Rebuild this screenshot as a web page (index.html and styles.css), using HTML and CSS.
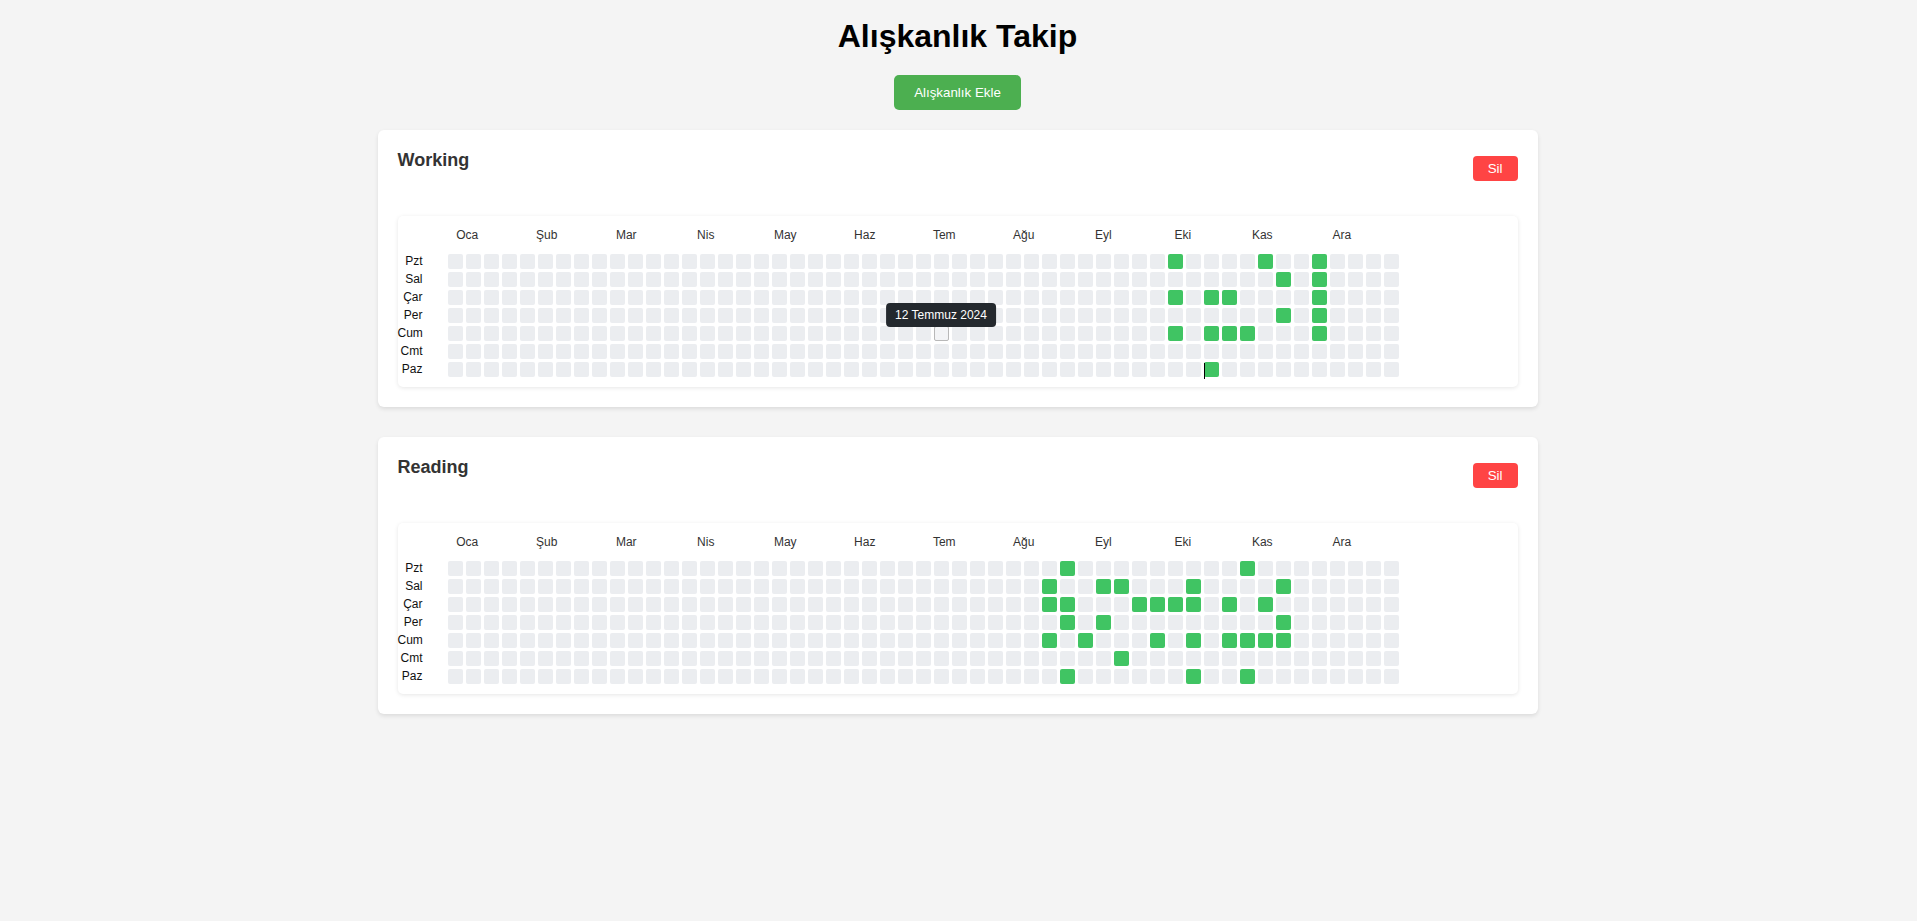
FILE: index.html
```html
<!DOCTYPE html>
<html lang="tr">
<head>
<meta charset="utf-8">
<title>Alışkanlık Takip</title>
<link rel="stylesheet" href="styles.css">
</head>
<body>
<div class="container">
  <h1 class="page-title">Alışkanlık Takip</h1>
  <div class="add-row"><button class="btn-add">Alışkanlık Ekle</button></div>

  <div class="habit" data-habit="working">
    <div class="habit-header">
      <h3 class="habit-title">Working</h3>
      <button class="btn-del">Sil</button>
    </div>
    <div class="cal">
      <div class="months"><span>Oca</span><span>Şub</span><span>Mar</span><span>Nis</span><span>May</span><span>Haz</span><span>Tem</span><span>Ağu</span><span>Eyl</span><span>Eki</span><span>Kas</span><span>Ara</span></div>
      <div class="cal-body">
        <div class="days"><span>Pzt</span><span>Sal</span><span>Çar</span><span>Per</span><span>Cum</span><span>Cmt</span><span>Paz</span></div>
        <div class="grid" id="grid-working"></div>
      </div>
    </div>
  </div>

  <div class="habit" data-habit="reading">
    <div class="habit-header">
      <h3 class="habit-title">Reading</h3>
      <button class="btn-del">Sil</button>
    </div>
    <div class="cal">
      <div class="months"><span>Oca</span><span>Şub</span><span>Mar</span><span>Nis</span><span>May</span><span>Haz</span><span>Tem</span><span>Ağu</span><span>Eyl</span><span>Eki</span><span>Kas</span><span>Ara</span></div>
      <div class="cal-body">
        <div class="days"><span>Pzt</span><span>Sal</span><span>Çar</span><span>Per</span><span>Cum</span><span>Cmt</span><span>Paz</span></div>
        <div class="grid" id="grid-reading"></div>
      </div>
    </div>
  </div>
</div>
<script src="script.js"></script>
</body>
</html>
```

FILE: styles.css
```css
* { box-sizing: border-box; }
body {
  margin: 0;
  background: #f4f4f4;
  font-family: "Liberation Sans", Arial, sans-serif;
  color: #000;
}
.container {
  width: 1160px;
  margin: 0 auto;
  padding-top: 18px;
  position: relative;
  left: -1px;
}
.page-title {
  margin: 0 0 20px;
  font-size: 32px;
  font-weight: bold;
  text-align: center;
  line-height: normal;
}
.add-row {
  display: flex;
  justify-content: center;
  margin-bottom: 20px;
}
.btn-add {
  font-family: "Liberation Sans", Arial, sans-serif;
  font-size: 13.333px;
  background: #4caf50;
  color: #fff;
  border: none;
  border-radius: 5px;
  padding: 10px 20px;
  line-height: normal;
}
.habit {
  background: #fff;
  border-radius: 6px;
  box-shadow: 0 2px 4px rgba(0, 0, 0, 0.1);
  padding: 20px;
  margin-bottom: 30px;
}
.habit-header {
  display: flex;
  justify-content: space-between;
  align-items: center;
  margin-bottom: 30px;
}
.habit-title {
  margin: 0 0 15px;
  font-size: 18px;
  font-weight: bold;
  color: #333;
  line-height: normal;
}
.btn-del {
  font-family: "Liberation Sans", Arial, sans-serif;
  font-size: 13.333px;
  background: #ff4444;
  color: #fff;
  border: none;
  border-radius: 4px;
  padding: 5px 15px;
  line-height: normal;
}
.cal {
  background: #fff;
  border-radius: 5px;
  box-shadow: 0 1px 4px rgba(0, 0, 0, 0.1);
  padding: 10px 10px 10px 0;
}
.months {
  display: flex;
  width: 954px;
  margin-left: 30px;
  height: 20px;
  line-height: 18px;
  margin-bottom: 8px;
  font-size: 12px;
  color: #333;
}
.months span {
  flex: 1;
  text-align: center;
}
.cal-body {
  display: flex;
}
.days {
  width: 25px;
  margin-right: 25px;
  display: flex;
  flex-direction: column;
  gap: 3px;
  font-size: 12px;
  text-align: right;
  color: #111;
}
.days span {
  height: 15px;
  line-height: 15px;
  white-space: nowrap;
}
.grid {
  display: grid;
  grid-template-rows: repeat(7, 15px);
  grid-auto-flow: column;
  grid-auto-columns: 15px;
  gap: 3px;
}
.cell {
  background: #ebedf0;
  border-radius: 2px;
  position: relative;
}
.cell.on {
  background: #40c463;
}
.cell.hover {
  background: #f3f4f6;
  border: 1px solid #b8b8b8;
}
.tooltip {
  position: absolute;
  bottom: 100%;
  left: 50%;
  transform: translateX(-50%);
  background: #24292e;
  color: #fff;
  font-size: 12px;
  line-height: normal;
  padding: 5px 9px;
  border-radius: 4px;
  white-space: nowrap;
  z-index: 2;
}
.cursor {
  position: absolute;
  left: 0;
  top: 1px;
  width: 1px;
  height: 16px;
  background: #000;
  z-index: 2;
}
```

FILE: script.js
```javascript
var data = {
  working: {
    on: [[40,45,48],[46,48],[40,42,43,48],[46,48],[40,42,43,44,48],[],[42]],
    hover: [4, 27],
    cursor: [6, 42]
  },
  reading: {
    on: [[34,44],[33,36,37,41,46],[33,34,38,39,40,41,43,45],[34,36,46],[33,35,39,41,43,44,45,46],[37],[34,41,44]]
  }
};
Object.keys(data).forEach(function (key) {
  var d = data[key];
  var grid = document.getElementById('grid-' + key);
  for (var c = 0; c < 53; c++) {
    for (var r = 0; r < 7; r++) {
      var cell = document.createElement('div');
      cell.className = 'cell';
      if (d.on[r].indexOf(c) !== -1) cell.className += ' on';
      if (d.hover && d.hover[0] === r && d.hover[1] === c) {
        cell.className += ' hover';
        var tip = document.createElement('div');
        tip.className = 'tooltip';
        tip.textContent = '12 Temmuz 2024';
        cell.appendChild(tip);
      }
      if (d.cursor && d.cursor[0] === r && d.cursor[1] === c) {
        var cur = document.createElement('span');
        cur.className = 'cursor';
        cell.appendChild(cur);
      }
      grid.appendChild(cell);
    }
  }
});
```
